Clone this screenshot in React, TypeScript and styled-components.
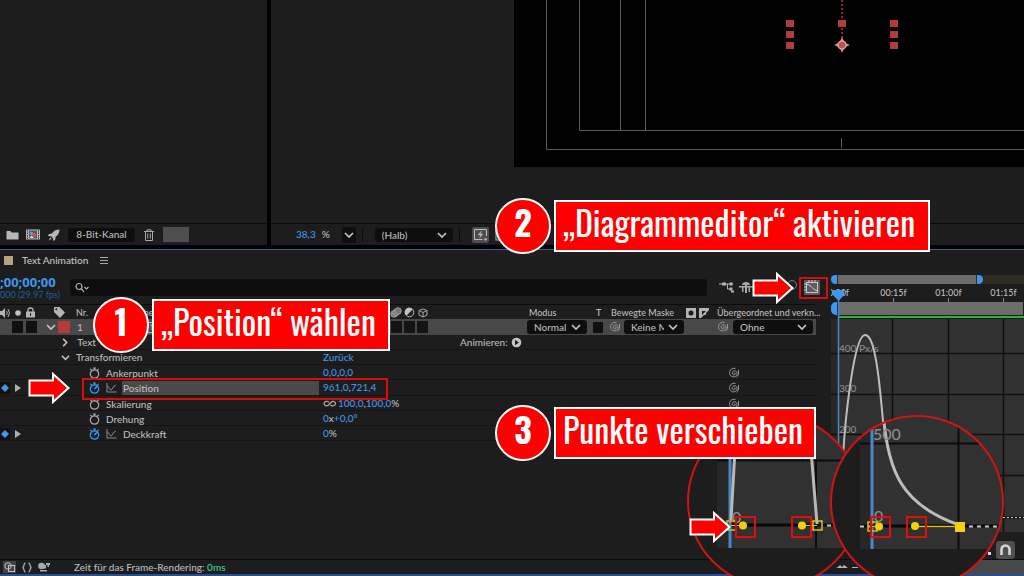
import React from "react";
import styled, { createGlobalStyle } from "styled-components";

const UI = `Lato, "Noto Sans", sans-serif`;
const NARROW = `Oswald, "Roboto Condensed", "Open Sans Condensed", Roboto, "Liberation Sans", sans-serif`;
const PANEL = "#1d1d1d";
const BLUE = "#4096ec";
const RED = "#fe0000";

const GlobalStyle = createGlobalStyle`
  *, *::before, *::after { box-sizing: border-box; }
  body { margin: 0; background: #000; color: #bcbcbc; font: 500 10px/15px ${UI}; overflow: hidden; }
  button, input, select { font: inherit; color: inherit; border: 0; padding: 0; margin: 0; background: none; }
  button { display: inline-flex; align-items: center; justify-content: center; }
  svg { display: block; flex: none; }
`;

const Page = styled.main`
  position: relative;
  display: flex;
  flex-direction: column;
  min-height: 100vh;
  overflow: hidden;
`;

const TopPanels = styled.div`
  display: grid;
  grid-template-columns: 267px minmax(0, 1fr);
  gap: 4px;
  height: 245px;
  margin-bottom: 4px;
`;

const Panel = styled.section`
  display: flex;
  flex-direction: column;
  min-width: 0;
  background: ${PANEL};
`;

const PanelBody = styled.div`
  flex: 1;
  padding-left: ${(p: { $inset?: number }) => p.$inset ?? 0}px;
  overflow: hidden;
`;

const PanelBar = styled.div<{ $start: number; $gap: number }>`
  display: flex;
  align-items: center;
  height: 22px;
  gap: ${(p) => p.$gap}px;
  padding-left: ${(p) => p.$start}px;
  border-top: 1px solid #0c0c0c;
`;

const IconButton = styled.button<{ $tone?: string }>`
  flex: none;
  min-width: 14px;
  height: 16px;
  border-radius: 2px;
  background: ${(p) => p.$tone ?? "none"};
`;

const DarkButton = styled.button`
  height: 14px;
  width: 67px;
  border-radius: 3px;
  background: #0e0e0e;
`;

const Swatch = styled.span<{ $w: number; $h: number; $color: string }>`
  flex: none;
  width: ${(p) => p.$w}px;
  height: ${(p) => p.$h}px;
  background: ${(p) => p.$color};
`;

const Canvas = styled.svg`
  width: 100%;
  height: 167px;
  background: #000;
`;

const SelectBox = styled.span<{ $w: number }>`
  position: relative;
  display: inline-flex;
  align-items: center;
  flex: none;
  width: ${(p) => p.$w}px;
  height: 14px;
  border-radius: 3px;
  background: #0e0e0e;
  select {
    appearance: none;
    width: 100%;
    height: 14px;
    padding: 0 20px 0 7px;
    outline: 0;
  }
  svg {
    position: absolute;
    right: 6px;
    pointer-events: none;
  }
`;

const Blue = styled.span`
  color: ${BLUE};
`;

const Divider = styled.span`
  width: 1px;
  height: 14px;
  margin-right: 6px;
  background: #0c0c0c;
`;

const Percent = styled.span`
  margin-right: 6px;
`;

const Timeline = styled.section`
  display: grid;
  grid-template-columns: minmax(0, 1fr) 208px;
  grid-template-rows: 1fr 15px;
  flex: 1;
  border-top: 1px solid #2f5f9c;
  border-bottom: 2px solid #2a4d8c;
  background: ${PANEL};
`;

const Layers = styled.div`
  display: flex;
  flex-direction: column;
  min-width: 0;
`;

const TabRow = styled.div`
  display: flex;
  align-items: center;
  gap: 9px;
  height: 20px;
  padding-left: 4px;
  color: #c4c4c4;
`;

const SearchRow = styled.div`
  display: grid;
  grid-template-columns: 70px minmax(0, 1fr) 109px;
  align-items: center;
  height: 34px;
`;

const Timecode = styled.div`
  color: ${BLUE};
  font: 700 13px/16px "Noto Sans", sans-serif;
  white-space: nowrap;
`;

const Fps = styled.div`
  color: #1f5f9c;
  font: 9px/10px ${UI};
  white-space: nowrap;
`;

const SearchField = styled.label`
  display: flex;
  align-items: center;
  height: 17px;
  padding-left: 5px;
  border-radius: 3px;
  background: #0e0e0e;
  input { flex: 1; min-width: 0; height: 17px; outline: 0; }
`;

const SearchTools = styled.div`
  display: flex;
  align-items: center;
  gap: 5px;
  padding-left: 12px;
`;

const LayerGrid = styled.div<{ $head?: boolean }>`
  display: grid;
  grid-template-columns: 43px 28px minmax(0, 1fr) 140px 62px 18px 78px 28px 103px;
  align-items: center;
  height: ${(p) => (p.$head ? 15 : 16)}px;
  font-size: ${(p) => (p.$head ? 9 : 10)}px;
  background: ${(p) => (p.$head ? PANEL : "#484848")};
  border-top: ${(p) => (p.$head ? "1px solid #0c0c0c" : "0")};
  white-space: nowrap;
`;

const Cell = styled.div<{ $gap?: number; $pad?: number }>`
  display: flex;
  align-items: center;
  min-width: 0;
  gap: ${(p) => p.$gap ?? 0}px;
  padding-left: ${(p) => p.$pad ?? 0}px;
`;

const PropRow = styled.div<{ $selected?: boolean }>`
  display: grid;
  grid-template-columns: 43px 280px minmax(0, 1fr) 88px;
  align-items: center;
  height: ${(p) => (p.$selected ? 16 : 15)}px;
  border-bottom: 1px solid #151515;
  white-space: nowrap;
`;

const PropName = styled.div<{ $pad: number }>`
  display: flex;
  align-items: center;
  gap: 6px;
  padding: 0 4px 0 ${(p) => p.$pad}px;
`;

const NameText = styled.span<{ $selected?: boolean }>`
  flex: 1;
  line-height: 14px;
  margin-left: -1px;
  padding-left: 1px;
  background: ${(p) => (p.$selected ? "#4a4a4a" : "none")};
`;

const Animate = styled.button`
  justify-self: start;
  gap: 3px;
  height: 14px;
  margin-left: 137px;
`;

const StatusBar = styled.footer`
  display: flex;
  align-items: center;
  gap: 5px;
  grid-column: 1 / -1;
  border-top: 1px solid #0c0c0c;
  padding-left: 3px;
`;

const StatusText = styled.span`
  flex: 1;
  padding-left: 19px;
  em { font-style: normal; color: #35d69a; }
`;

const ScrollThumb = styled.span`
  width: 60px;
  height: 14px;
  background: #484848;
`;

const GraphColumn = styled.div`
  position: relative;
  display: flex;
  flex-direction: column;
  min-width: 0;
  margin-left: 15px;
  padding-top: 25px;
  overflow: hidden;
`;

const NavTrack = styled.div`
  display: flex;
  height: 9px;
  background: #2e2b22;
`;

const Handle = styled.span<{ $side: "start" | "end" }>`
  width: 6px;
  background: ${BLUE};
  border-radius: ${(p) => (p.$side === "start" ? "5px 0 0 5px" : "0 5px 5px 0")};
`;

const NavSpan = styled.span<{ $w?: number }>`
  flex: ${(p) => (p.$w ? `0 0 ${p.$w}px` : "1")};
  margin: 0 1px;
  background: #6c6c6c;
`;

const Ruler = styled.div`
  display: flex;
  height: 18px;
  margin-left: -20px;
  font-size: 9px;
`;

const Tick = styled.span`
  display: flex;
  flex-direction: column;
  align-items: center;
  flex: none;
  width: 55px;
  padding-top: 1px;
  &::after { content: ""; width: 1px; height: 4px; background: #888; margin-top: -2px; }
`;

const WorkArea = styled.div`
  display: flex;
  height: 13px;
`;

const CacheLine = styled.div`
  height: 4px;
  margin-left: 7px;
  border: solid ${PANEL};
  border-width: 1px 0;
  background: #28b53a;
`;

const Graph = styled.svg`
  width: 100%;
  height: 213px;
  background: #313131;
`;

const GraphTools = styled.div`
  display: flex;
  flex: 1;
  align-items: center;
  justify-content: flex-end;
  padding: 8px 9px 0 0;
`;

const SnapButton = styled.button`
  width: 19px;
  height: 18px;
  border-radius: 3px;
  background: #505050;
`;

const Playhead = styled.svg`
  position: absolute;
  left: 1px;
  top: 38px;
`;

const Overlay = styled.svg`
  position: absolute;
  left: 680px;
  top: 410px;
`;

const Badge = styled.span<{ $x: number; $y: number }>`
  position: absolute;
  left: ${(p) => p.$x}px;
  top: ${(p) => p.$y}px;
  width: 56px;
  height: 56px;
  border: 2px solid #fff;
  border-radius: 50%;
  background: ${RED};
  color: #fff;
  font: 700 34px/44px ${NARROW};
  text-align: center;
`;

const Callout = styled.span<{ $x: number; $y: number; $w: number }>`
  position: absolute;
  left: ${(p) => p.$x}px;
  top: ${(p) => p.$y}px;
  width: ${(p) => p.$w}px;
  height: 52px;
  padding-left: 7px;
  border: 2px solid #fff;
  background: ${RED};
  color: #fff;
  font: 34px/40px ${NARROW};
  white-space: nowrap;
`;

const Frame = styled.span<{ $x: number; $y: number; $w: number }>`
  position: absolute;
  left: ${(p) => p.$x}px;
  top: ${(p) => p.$y}px;
  width: ${(p) => p.$w}px;
  height: 22px;
  border: 2px solid #d80c0c;
`;

const FloatingSvg = styled.svg<{ $x: number; $y: number }>`
  position: absolute;
  left: ${(p) => p.$x}px;
  top: ${(p) => p.$y}px;
`;

const Arrow = ({ x, y }: { x: number; y: number }) => (
  <FloatingSvg $x={x} $y={y} width="43" height="34" viewBox="0 0 43 34" aria-hidden>
    <path d="M1.5 9.5H25V3L40.5 17 25 31v-6.500H1.500z" fill={RED} stroke="#fff" strokeWidth="2" />
  </FloatingSvg>
);

const Chevron = ({ dir = "down", size = 10 }: { dir?: "down" | "right"; size?: number }) => (
  <svg width={size} height={size} viewBox="0 0 10 10" fill="none" stroke="#c4c4c4" strokeWidth="1.7">
    <path d={dir === "down" ? "M1 3l4 4 4-4" : "M3.500 1l4 4-4 4"} />
  </svg>
);

const Select = ({ label, value, w }: { label: string; value: string; w: number }) => (
  <SelectBox $w={w}>
    <select aria-label={label} defaultValue={value}>
      <option>{value}</option>
    </select>
    <Chevron />
  </SelectBox>
);

const Spiral = () => (
  <svg width="12" height="12" viewBox="0 0 12 12" fill="none" stroke="#9a9a9a" strokeWidth="1">
    <path d="M6 6.200c.2-.8 1.400-.4 1.300.6C7.100 8.300 4.400 8.200 4.200 6.200 4.100 4 6.800 3 8.200 4.400c1.900 2 .4 5.400-2.300 5.500C2.600 10 .9 7 1.700 4.400 2.500 2 5 .8 7.500 1.400M10.500 3v4.500c-.3 1-1 2-2 2.700" />
  </svg>
);

const Stopwatch = ({ on }: { on?: boolean }) => (
  <svg width="11" height="12" viewBox="0 0 11 12" fill="none" stroke={on ? BLUE : "#a8a8a8"} strokeWidth="1.200">
    <circle cx="5.500" cy="7" r="4.200" fill={on ? "#10233a" : "none"} />
    <path d="M4 1h3M5.500 1v2M1.300 1.800l1.500 1.500M9.700 1.800L8.200 3.300" />
    {on && <path d="M5.500 7l2.700-2.700" strokeWidth="1.500" />}
  </svg>
);

const GraphIcon = () => (
  <svg width="11" height="11" viewBox="0 0 11 11" fill="none" stroke="#8a8a8a">
    <path d="M1 1v9h9.500M1 4c2 0 2.500 4 4 4s2-4.500 5-5" />
  </svg>
);

const Keyframe = () => (
  <Cell $gap={5}>
    <svg width="10" height="12" viewBox="0 0 10 12">
      <rect width="10" height="12" fill="#101010" />
      <path d="M5 2l4 4-4 4-4-4z" fill={BLUE} />
    </svg>
    <svg width="6" height="8" viewBox="0 0 6 8"><path d="M0 0l6 4-6 4z" fill="#b0b0b0" /></svg>
  </Cell>
);

interface Prop {
  name: string;
  on?: boolean;
  selected?: boolean;
  link?: boolean;
  value: React.ReactNode;
}

const PROPS: Prop[] = [
  { name: "Ankerpunkt", link: true, value: <><Blue>0,0</Blue>,<Blue>0,0</Blue></> },
  { name: "Position", on: true, selected: true, link: true, value: <><Blue>961,0</Blue>,<Blue>721,4</Blue></> },
  {
    name: "Skalierung",
    link: true,
    value: (
      <>
        <svg width="15" height="8" viewBox="0 0 15 8" fill="none" stroke="#b0b0b0" strokeWidth="1.200">
          <path d="M6 2.500C4.500.5 1 1 1 3.500S4 6.500 5.500 5L8 2.500C9.500 1 12.500 1 12.500 3.500S9 6.500 7.500 5" />
        </svg>
        <Blue>100,0</Blue>,<Blue>100,0</Blue>%
      </>
    ),
  },
  { name: "Drehung", value: <><Blue>0</Blue>x<Blue>+0,0°</Blue></> },
  { name: "Deckkraft", on: true, value: <><Blue>0</Blue>%</> },
];

const HandleFrames = ({ xs }: { xs: number[] }) => (
  <>
    {xs.map((x) => (
      <rect key={x} x={x} y="107" width="19" height="20" fill="none" stroke="#e00d0d" strokeWidth="2" />
    ))}
  </>
);

export default function App() {
  return (
    <Page>
      <GlobalStyle />
      <TopPanels>
        <Panel>
          <PanelBody />
          <PanelBar $start={5} $gap={7}>
            <IconButton aria-label="Neuer Ordner">
              <svg width="13" height="10" viewBox="0 0 13 10"><path d="M.5 1h4l1 1.500h7V9.500H.5z" fill="#b8b8b8" /></svg>
            </IconButton>
            <IconButton aria-label="Neue Komposition">
              <svg width="14" height="11" viewBox="0 0 14 11">
                <rect y=".5" width="14" height="10" fill="#b8b8b8" />
                <path d="M1.500 1v9M12.500 1v9" stroke="#333" strokeDasharray="1.500 1" />
                <rect x="3" y="1.500" width="8" height="8" fill="#55585c" />
                <circle cx="5.500" cy="4.500" r="1.800" fill="#57a0e0" />
                <circle cx="8.500" cy="6" r="2" fill="#c9554a" />
                <path d="M3.500 9l2-2.500L8 9z" fill="#ddd" />
              </svg>
            </IconButton>
            <IconButton aria-label="Projekteinstellungen">
              <svg width="12" height="12" viewBox="0 0 12 12" fill="#b8b8b8">
                <path d="M11.500.5C8 .5 5.500 2 4 4.500L1 5 0 7l3 .3L5 9.200 5.200 12l2-1.200.4-3C10 6 11.500 4 11.500.5zM2.500 8.500L.5 11.500 3.800 9.800z" />
              </svg>
            </IconButton>
            <DarkButton>8-Bit-Kanal</DarkButton>
            <IconButton aria-label="Löschen">
              <svg width="10" height="12" viewBox="0 0 10 12" fill="none" stroke="#a8a8a8">
                <path d="M0 2.500h10M3 2V.8h4V2M1.500 2.500v9h7v-9M3.700 4.500v5M6.300 4.500v5" />
              </svg>
            </IconButton>
            <Swatch $w={26} $h={15} $color="#4e4e4e" />
          </PanelBar>
        </Panel>
        <Panel>
          <PanelBody $inset={243}>
            <Canvas aria-label="Komposition">
              <g fill="none" stroke="#5c5c5c">
                <path d="M32.500 0V149.500H2000M65.500 0V130.500H2000M106.500 0V130M131.500 0V130M327.500 138v10" />
              </g>
              <path d="M328 0v38" stroke="#b04040" strokeWidth="1.500" strokeDasharray="2 2" />
              <g fill="#b23c3c">
                {[272, 376].map((x) => [20, 31, 42].map((y) => <rect key={`${x}-${y}`} x={x} y={y} width="8" height="7" />))}
                <rect x="324" y="20" width="8" height="7" />
              </g>
              <path d="M328 37l2.500 5.500L336 45l-5.500 2.500L328 53l-2.500-5.500L320 45l5.500-2.500z" fill="#c88a85" />
              <circle cx="328" cy="45" r="4" fill="#c0504c" stroke="#d8a09c" strokeWidth="1.500" />
            </Canvas>
          </PanelBody>
          <PanelBar $start={25} $gap={6}>
            <Blue>38,3</Blue>
            <Percent>%</Percent>
            <IconButton $tone="#0e0e0e" aria-label="Zoomfaktor"><Chevron /></IconButton>
            <Divider />
            <Select label="Auflösung" value="(Halb)" w={78} />
            <Divider />
            <IconButton $tone="#4c4c4c" aria-label="Schnelle Vorschau">
              <svg width="17" height="16" viewBox="0 0 17 16" fill="none" stroke="#c0c0c0">
                <path d="M14.500 9V2.500h-12v10h8" />
                <path d="M9.500 4L6 8h2.500l-1 3L11 7H8.500z" fill="#c0c0c0" strokeWidth=".3" />
                <path d="M11.500 11.500h4l-2 2.500z" fill="#c0c0c0" stroke="none" />
              </svg>
            </IconButton>
            <IconButton aria-label="Transparenzraster">
              <svg width="14" height="14" viewBox="0 0 14 14" fill="none" stroke="#b0b0b0"><rect x="1" y="2" width="11" height="10" /></svg>
            </IconButton>
          </PanelBar>
        </Panel>
      </TopPanels>

      <Timeline>
        <Layers>
          <TabRow>
            <Swatch $w={9} $h={9} $color="#b5a47d" />
            <span>Text Animation</span>
            <IconButton aria-label="Bedienfeldmenü">
              <svg width="8" height="8" viewBox="0 0 8 8" stroke="#a8a8a8"><path d="M0 1.500h8M0 4.500h8M0 7.500h8" /></svg>
            </IconButton>
          </TabRow>
          <SearchRow>
            <div>
              <Timecode>;00;00;00</Timecode>
              <Fps>000 (29.97 fps)</Fps>
            </div>
            <SearchField>
              <svg width="15" height="11" viewBox="0 0 15 11" fill="none" stroke="#b4b4b4" strokeWidth="1.200">
                <circle cx="4" cy="4.500" r="3" /><path d="M6.200 6.700L9 9.800M9.500 5l2 2 2-2" />
              </svg>
              <input type="text" aria-label="Suchen" />
            </SearchField>
            <SearchTools>
              <IconButton aria-label="Miniflussdiagramm">
                <svg width="15" height="12" viewBox="0 0 15 12" fill="none" stroke="#b4b4b4">
                  <path d="M0 3h5M7 3h7M8.500 3v5H13" /><path d="M3 1.500h4v3H3zM10.500 1.500h3v3h-3zM10.500 6.500h3v3h-3z" fill="#b4b4b4" stroke="none" /><path d="M12 9.500h3v2h-3z" fill="#b4b4b4" stroke="none" />
                </svg>
              </IconButton>
              <IconButton aria-label="Schüchterne Ebenen ausblenden">
                <svg width="14" height="12" viewBox="0 0 14 12" fill="#a8a8a8"><path d="M3 4c0-4 8-4 8 0zM0 5h14v1.500H0zM6 4h2v8H6zM3 6h1.500v5H3zM9.500 6H11v5H9.500z" /></svg>
              </IconButton>
            </SearchTools>
          </SearchRow>

          <LayerGrid $head>
            <Cell $gap={4}>
              <svg width="10" height="10" viewBox="0 0 10 10" fill="#b4b4b4"><path d="M0 3h2l3-3v10L2 7H0z" /><path d="M6.500 3q1.500 2 0 4M8 1q3 4 0 8" fill="none" stroke="#b4b4b4" /></svg>
              <svg width="8" height="8" viewBox="0 0 8 8" fill="#c0c0c0"><circle cx="4" cy="4" r="2.800" /></svg>
              <svg width="9" height="11" viewBox="0 0 9 11"><rect y="4.500" width="9" height="6" fill="#b4b4b4" /><path d="M2 5V3q0-2 2.500-2T7 3v2" fill="none" stroke="#b4b4b4" strokeWidth="1.300" /><path d="M4.500 6v3" stroke="#222" /></svg>
            </Cell>
            <Cell $pad={11}>
              <svg width="11" height="11" viewBox="0 0 11 11"><path d="M0 0h5.500L11 5.500 6 11 0 5z" fill="#b4b4b4" /><circle cx="2.300" cy="2.300" r="1" fill="#222" /></svg>
            </Cell>
            <Cell $gap={14} $pad={5}><span>Nr.</span><span>Ebenenname</span></Cell>
            <Cell $gap={2} $pad={3}>
              <svg width="12" height="11" viewBox="0 0 12 11" fill="#777" stroke="#a8a8a8" strokeWidth=".8"><circle cx="4" cy="7" r="3.300" /><circle cx="6" cy="5.500" r="3.300" /><circle cx="8" cy="4" r="3.300" /></svg>
              <svg width="11" height="11" viewBox="0 0 11 11"><circle cx="5.500" cy="5.500" r="4.300" fill="#222" stroke="#b4b4b4" /><path d="M8.500 2.500A4.300 4.300 0 1 0 2.500 8.500z" fill="#c4c4c4" /></svg>
              <svg width="12" height="10" viewBox="0 0 12 10" fill="none" stroke="#a8a8a8"><path d="M6 1l4 1.500v4.500L6 9 2 7V2.500zM2 2.500L6 4.500l4-2M6 4.500V9" /></svg>
            </Cell>
            <Cell $pad={2}>Modus</Cell>
            <Cell $pad={7}>T</Cell>
            <Cell $pad={4}>Bewegte Maske</Cell>
            <Cell $gap={3}>
              <svg width="11" height="10" viewBox="0 0 11 10"><rect x="1" width="10" height="10" fill="#b4b4b4" /><circle cx="6" cy="5" r="2.500" fill="#1d1d1d" /></svg>
              <svg width="10" height="10" viewBox="0 0 10 10"><path d="M0 0h10v2L7 5v2H5L2 10H0z" fill="#b4b4b4" /><path d="M3 3h4L3 7z" fill="#1d1d1d" /></svg>
            </Cell>
            <Cell $pad={4}>Übergeordnet und verkn...</Cell>
          </LayerGrid>

          <LayerGrid>
            <Cell $gap={3} $pad={12}><Swatch $w={11} $h={12} $color="#101010" /><Swatch $w={11} $h={12} $color="#101010" /></Cell>
            <Cell $gap={2} $pad={3}><Chevron /><Swatch $w={12} $h={12} $color="#b63a3a" /></Cell>
            <Cell $gap={64} $pad={6}>
              <span>1</span>
              <svg width="10" height="11" viewBox="0 0 10 11" fill="none" stroke="#b4b4b4"><rect x=".5" y=".5" width="9" height="10" /><path d="M3 3h4M5 3v5" /></svg>
            </Cell>
            <Cell $gap={2} $pad={4}>
              <Swatch $w={11} $h={12} $color="#141414" /><Swatch $w={11} $h={12} $color="#141414" /><Swatch $w={11} $h={12} $color="#141414" />
            </Cell>
            <Cell><Select label="Modus" value="Normal" w={60} /></Cell>
            <Cell $pad={4}><Swatch $w={10} $h={11} $color="#101010" /></Cell>
            <Cell $gap={3} $pad={2}><Spiral /><Select label="Bewegte Maske" value="Keine Maske" w={60} /></Cell>
            <Cell />
            <Cell $gap={4} $pad={4}><Spiral /><Select label="Übergeordnet und verknüpft" value="Ohne" w={80} /></Cell>
          </LayerGrid>

          <PropRow>
            <span />
            <PropName $pad={17}><Chevron dir="right" size={9} /><span>&nbsp;Text</span></PropName>
            <Animate>
              Animieren:
              <svg width="11" height="11" viewBox="0 0 11 11"><circle cx="5.500" cy="5.500" r="4.800" fill="#c4c4c4" /><path d="M4 2.800l4 2.700-4 2.700z" fill="#1d1d1d" /></svg>
            </Animate>
          </PropRow>
          <PropRow>
            <span />
            <PropName $pad={18}><Chevron size={9} /><span>Transformieren</span></PropName>
            <Blue>Zurück</Blue>
          </PropRow>
          {PROPS.map((p) => (
            <PropRow key={p.name} $selected={p.selected}>
              {p.on ? <Keyframe /> : <span />}
              <PropName $pad={46}>
                <Stopwatch on={p.on} />
                {p.on && <GraphIcon />}
                <NameText $selected={p.selected}>{p.name}</NameText>
              </PropName>
              <Cell>{p.value}</Cell>
              {p.link && <Spiral />}
            </PropRow>
          ))}
        </Layers>

        <GraphColumn>
          <NavTrack><Handle $side="start" /><NavSpan $w={138} /><Handle $side="end" /></NavTrack>
          <Ruler><Tick>0:00f</Tick><Tick>00:15f</Tick><Tick>01:00f</Tick><Tick>01:15f</Tick></Ruler>
          <WorkArea><Handle $side="start" /><NavSpan /></WorkArea>
          <CacheLine />
          <Graph aria-label="Geschwindigkeitsdiagramm">
            <rect width="7" height="213" fill="#272727" />
            <path d="M61.500 0V213M117.500 0V213M172.500 0V213M0 34.500H500M0 75.500H500M0 115.500H500M0 156.500H500" stroke="#101010" strokeWidth="1.500" />
            <path d="M0 198.500H500" stroke="#111" strokeWidth="2" />
            <path d="M0 198.500H500" stroke="#c8c8c8" strokeDasharray="2 2" />
            <g fill="#8c8c8c" fontFamily="Lato" fontSize="10">
              <text x="8" y="33">400 Px/s</text><text x="8" y="73">300</text><text x="8" y="114">200</text>
            </g>
            <path d="M12 139C14 100 23 16 34 16S49 62 57 160" fill="none" stroke="#bcbcbc" strokeWidth="2" />
          </Graph>
          <GraphTools>
            <SnapButton aria-label="Ausrichten">
              <svg width="13" height="13" viewBox="0 0 13 13" fill="none" stroke="#d4d4d4" strokeWidth="2.600"><path d="M2.500 12V6.500a4 4 0 0 1 8 0V12" /></svg>
            </SnapButton>
          </GraphTools>
          <Playhead width="13" height="245" viewBox="0 0 13 245">
            <path d="M6.500 12V245" stroke="#4a86c8" strokeWidth="1.500" />
            <path d="M1 2h11v5l-5.500 6L1 7z" fill={BLUE} />
          </Playhead>
        </GraphColumn>

        <StatusBar>
          <svg width="13" height="12" viewBox="0 0 13 12" fill="none" stroke="#c0c0c0"><rect width="13" height="12" fill="#444" stroke="none" /><circle cx="5" cy="5" r="3.200" /><rect x="5.500" y="4.500" width="6" height="6" /></svg>
          <svg width="12" height="11" viewBox="0 0 12 11" fill="none" stroke="#a8a8a8" strokeWidth="1.300"><path d="M4.500 1C2 1 4 5 1.500 5.500 4 6 2 10 4.500 10M7.500 1C10 1 8 5 10.500 5.500 8 6 10 10 7.500 10" /></svg>
          <svg width="12" height="10" viewBox="0 0 12 10" fill="#a8a8a8"><circle cx="3.500" cy="4" r="3.300" /><path d="M3 3h5v3.500H4zM2 8h7v1.500H2zM8 1h4v2h-1v2H9.500V3H8z" /></svg>
          <StatusText>Zeit für das Frame-Rendering: <em>0ms</em></StatusText>
          <ScrollThumb />
        </StatusBar>
      </Timeline>

      <Overlay width="344" height="166" viewBox="0 0 344 166" aria-hidden>
        <defs>
          <clipPath id="lensA"><circle cx="94" cy="91" r="86" /></clipPath>
          <clipPath id="lensB"><circle cx="237" cy="92" r="86" /></clipPath>
        </defs>
        <rect x="308" y="142" width="3" height="3" fill="#d8d8d8" />
        <g clipPath="url(#lensA)">
          <rect width="344" height="166" fill={PANEL} />
          <rect x="37" width="200" height="138" fill="#313131" />
          <rect x="37" width="12" height="138" fill="#272727" />
          <path d="M37 50.500H200M136 50V138" stroke="#0c0c0c" strokeWidth="2" />
          <path d="M50 0V138" stroke="#4a86c8" strokeWidth="3" />
          <path d="M52 115H160" stroke="#080808" strokeWidth="3" />
          <path d="M147 115.500h4M157 115.500h3" stroke="#c8c8c8" strokeWidth="2" />
          <path d="M55 40L51 110M131 40L137 114" stroke="#b8b8b8" strokeWidth="3" />
          <text x="52" y="113" fill="#8c8c8c" fontFamily="Lato" fontSize="16">0</text>
          <path d="M123 115.500h14M51 115.500h12" stroke="#e0c010" />
          <g fill="none" stroke="#e0c010" strokeWidth="1.500"><rect x="133" y="111" width="9" height="9" /><rect x="47" y="111" width="9" height="9" /></g>
          <g fill="#f0d010"><circle cx="63" cy="115.500" r="4" /><circle cx="122" cy="115.500" r="4" /></g>
          <HandleFrames xs={[56, 112]} />
        </g>
        <circle cx="94" cy="91" r="86" fill="none" stroke="#d01414" strokeWidth="2" />
        <path d="M156 158l2-1 2-2 2 2 2-2 4 3zM172 157h6v1h-6z" fill="#b4b4b4" />
        <g clipPath="url(#lensB)">
          <rect width="344" height="166" fill={PANEL} />
          <rect x="180" width="164" height="139" fill="#313131" />
          <rect x="180" width="11" height="139" fill="#272727" />
          <path d="M180 33.500H344M278.500 0V139" stroke="#0c0c0c" strokeWidth="2" />
          <path d="M192 16V139" stroke="#4a86c8" strokeWidth="3" />
          <path d="M180 116H344" stroke="#080808" strokeWidth="3" />
          <path d="M180 116.500h10M289 116.500H330" stroke="#c8c8c8" strokeWidth="2" strokeDasharray="4 4" />
          <path d="M203 0C207 62 222 95 279 115" fill="none" stroke="#bcbcbc" strokeWidth="3" />
          <g fill="#8c8c8c" fontFamily="Lato" fontSize="16"><text x="193" y="30">500</text><text x="194" y="112">0</text></g>
          <path d="M235 116.500H280M192 116.500h8" stroke="#e0c010" strokeWidth="1.500" />
          <rect x="188" y="112" width="9" height="9" fill="none" stroke="#e0c010" strokeWidth="1.500" />
          <g fill="#f0d010"><circle cx="199" cy="116.500" r="4" /><circle cx="235" cy="116" r="4" /><rect x="275" y="112" width="10" height="10" /></g>
          <HandleFrames xs={[191, 227]} />
        </g>
        <circle cx="237" cy="92" r="86" fill="none" stroke="#d01414" strokeWidth="2" />
      </Overlay>

      <FloatingSvg $x={784} $y={279} width="42" height="18" viewBox="0 0 42 18" aria-hidden>
        <circle cx="8" cy="6" r="4.500" fill="none" stroke="#777" />
        <rect x="20" y="1" width="16" height="15" rx="1" fill="#5c5c5c" />
        <rect x="22.500" y="3.500" width="11" height="10" fill="none" stroke="#c8c8c8" />
        <path d="M20 5h2M20 8h2M20 11h2M25 1v2M28 1v2M31 1v2" stroke="#c8c8c8" />
        <path d="M23 5.500c5 0 5 6 11 6" fill="none" stroke="#d4d4d4" />
      </FloatingSvg>
      <Frame $x={82} $y={378} $w={306} />
      <Frame $x={799} $y={277} $w={29} />
      <Arrow x={28} y={371} />
      <Arrow x={752} y={271} />
      <Arrow x={689} y={510} />
      <Badge $x={93} $y={297}>1</Badge>
      <Badge $x={495} $y={198}>2</Badge>
      <Badge $x={495} $y={405}>3</Badge>
      <Callout $x={152} $y={299} $w={238}>„Position“ wählen</Callout>
      <Callout $x={554} $y={200} $w={376}>„Diagrammeditor“ aktivieren</Callout>
      <Callout $x={554} $y={407} $w={262}>Punkte verschieben</Callout>
    </Page>
  );
}
